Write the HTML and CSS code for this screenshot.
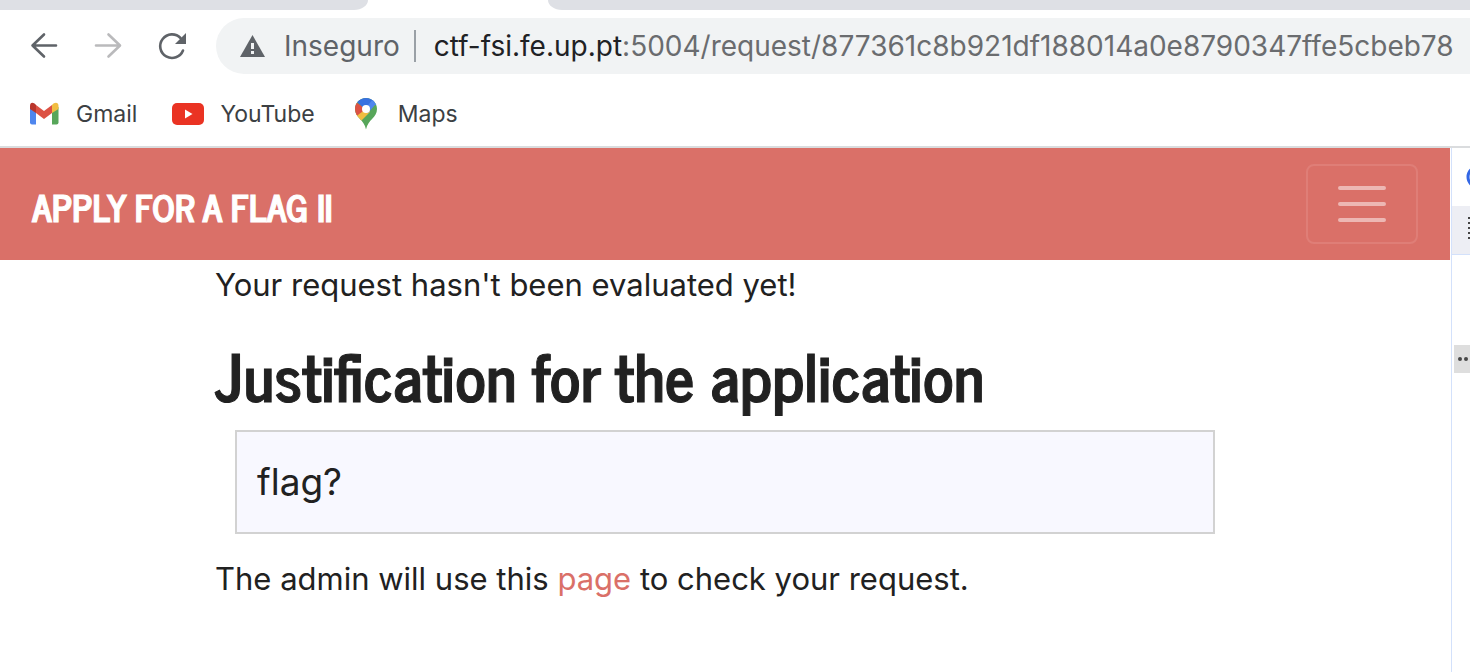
FILE: index.html
```html
<!DOCTYPE html>
<html lang="en">
<head>
<meta charset="utf-8">
<title>Apply for a Flag II</title>
<link rel="stylesheet" href="styles.css">
</head>
<body>
<header class="browser">
  <div class="tabs">
    <div class="tab tab-left"></div>
    <div class="tab-active"></div>
    <div class="tab tab-right"></div>
  </div>
  <div class="toolbar">
    <button class="nav-button" type="button" aria-label="Back">
      <svg width="32" height="32" viewBox="0 0 32 32" fill="none" stroke="#5f6368" stroke-width="2.600" stroke-linecap="round" stroke-linejoin="round"><path d="M28 15.500H4.500M16 4.500L4.500 15.500L16 26.500"/></svg>
    </button>
    <button class="nav-button" type="button" aria-label="Forward" disabled>
      <svg width="32" height="32" viewBox="0 0 32 32" fill="none" stroke="#bababc" stroke-width="2.600" stroke-linecap="round" stroke-linejoin="round"><path d="M4 15.500H27.500M16.500 4.500L28 15.500L16.500 26.500"/></svg>
    </button>
    <button class="nav-button" type="button" aria-label="Reload">
      <svg width="32" height="32" viewBox="0 0 32 32"><path d="M27 20.500A11.800 11.800 0 1 1 24.500 8" fill="none" stroke="#5f6368" stroke-width="2.600" stroke-linecap="round"/><path d="M30 3V14H19Z" fill="#5f6368"/></svg>
    </button>
    <div class="address">
      <svg class="warning" width="26" height="22" viewBox="0 0 26 22"><path d="M12.500 0L25 22H0Z" fill="#5f6368"/><path d="M11 8h3v6h-3zM11 16h3v3h-3z" fill="#f1f3f4"/></svg>
      <span class="security">Inseguro</span>
      <span class="divider"></span>
      <span class="url"><span class="host">ctf-fsi.fe.up.pt</span>:5004/request/877361c8b921df188014a0e8790347ffe5cbeb78</span>
    </div>
  </div>
  <nav class="bookmarks">
    <a class="bookmark" href="#">
      <svg width="32" height="32" viewBox="0 0 32 32"><path d="M2 9L8 12V26.500H4Q2 26.500 2 24.500Z" fill="#4f86ee"/><path d="M24 12L30.500 9V24.500Q30.500 26.500 28.500 26.500H24Z" fill="#57a65a"/><path d="M8 7L16 13L24 7V15L16 21L8 15Z" fill="#dc5244"/><path d="M2 11V8C2 4 5.500 4 8 7V15Z" fill="#b9362c"/><path d="M30.500 11V8C30.500 4 26.500 4 24 7V15Z" fill="#f1bd42"/></svg>
      <span>Gmail</span>
    </a>
    <a class="bookmark" href="#">
      <svg width="32" height="32" viewBox="0 0 32 32"><rect y="5" width="32" height="22" rx="5" fill="#ea3323"/><path d="M13 11.500V20.500L20.500 16Z" fill="#fff"/></svg>
      <span>YouTube</span>
    </a>
    <a class="bookmark" href="#">
      <svg width="32" height="32" viewBox="0 0 32 32"><defs><clipPath id="pin"><path d="M16 0C9.500 0 5 5 5 11C5 20 14 21 16 31.500C18 21 27 20 27 11C27 5 22.500 0 16 0Z"/></clipPath></defs><g clip-path="url(#pin)"><path d="M0 0H32V32H0Z" fill="#57a65a"/><path d="M4 18L16 5L20 14L8 26H4Z" fill="#f1bd42"/><path d="M0 0L16 11L6.500 18L0 16Z" fill="#dc5244"/><path d="M4 0H22L24 3L16 12L7.500 4.500Z" fill="#3871e0"/><path d="M23 1L32 0V7L25 7L18 15L15 11Z" fill="#4f86ee"/></g><circle cx="16" cy="11" r="4" fill="#fff"/></svg>
      <span>Maps</span>
    </a>
  </nav>
</header>
<div class="viewport">
  <div class="page">
    <nav class="navbar">
      <a class="brand" href="#">APPLY FOR A FLAG II</a>
      <button class="toggler" type="button" aria-label="Toggle navigation">
        <svg width="60" height="60" viewBox="0 0 60 60" stroke="#edb7b3" stroke-width="4" stroke-linecap="round"><path d="M8 14H52M8 30H52M8 46H52"/></svg>
      </button>
    </nav>
    <main class="content">
      <p class="status">Your request hasn't been evaluated yet!</p>
      <h1 class="title">Justification for the application</h1>
      <div class="answer">flag?</div>
      <p class="note">The admin will use this <a class="link" href="#">page</a> to check your request.</p>
    </main>
  </div>
  <aside class="devtools">
    <div class="panel-top">
      <svg width="18" height="58" viewBox="0 0 18 58"><circle cx="26" cy="29" r="10" fill="#eaf0fc" stroke="#3367e5" stroke-width="3"/></svg>
    </div>
    <div class="panel-bar">
      <svg width="18" height="48" viewBox="0 0 18 48"><path d="M17 11V35" stroke="#444" stroke-width="2" stroke-dasharray="2 3"/></svg>
    </div>
    <button class="more" type="button" aria-label="More">
      <svg width="16" height="28" viewBox="0 0 16 28" fill="#474747"><circle cx="6" cy="14" r="2"/><circle cx="12" cy="14" r="2"/></svg>
    </button>
  </aside>
</div>
</body>
</html>
```
FILE: styles.css
```css
* {
  box-sizing: border-box;
}

body {
  margin: 0;
  min-height: 100vh;
  display: flex;
  flex-direction: column;
  overflow: hidden;
  background: #fff;
  color: #212121;
  font-family: Inter, "Liberation Sans", sans-serif;
}

button {
  padding: 0;
  border: 0;
  background: none;
}

svg {
  display: block;
  flex: none;
}

a {
  color: inherit;
  text-decoration: none;
}

.browser {
  border-bottom: 2px solid #dadcde;
}

.tabs {
  display: flex;
  height: 10px;
}

.tab {
  background: #dee0e5;
}

.tab-left {
  flex: 0 0 25%;
  border-bottom-right-radius: 14px 10px;
}

.tab-active {
  flex: 0 0 180px;
}

.tab-right {
  flex: 1;
  border-bottom-left-radius: 14px 10px;
}

.toolbar {
  display: flex;
  align-items: center;
  gap: 32px;
  padding: 8px 0 8px 28px;
}

.address {
  flex: 1;
  min-width: 0;
  display: flex;
  align-items: center;
  height: 56px;
  margin-left: -4px;
  padding-left: 24px;
  border-radius: 28px 0 0 28px;
  background: #f1f3f4;
  color: #5f6368;
  font-size: 28px;
  white-space: nowrap;
  overflow: hidden;
}

.security {
  margin-left: 18px;
}

.divider {
  width: 2px;
  height: 32px;
  margin: 0 18px 0 14px;
  background: #9aa0a6;
}

.url {
  color: #6a6c6f;
}

.host {
  color: #202124;
}

.bookmarks {
  display: flex;
  align-items: center;
  gap: 35px;
  height: 64px;
  padding-left: 28px;
  color: #3c4043;
  font-size: 23px;
}

.bookmark {
  display: flex;
  align-items: center;
  gap: 16px;
}

.viewport {
  flex: 1;
  display: flex;
}

.page {
  flex: 1;
  margin-right: 1px;
}

.navbar {
  display: flex;
  align-items: center;
  justify-content: space-between;
  padding: 16px 32px;
  background: #da7068;
}

.brand {
  padding-top: 4px;
  color: #fff;
  font-family: "News Cycle", "Roboto Condensed", "Liberation Sans", sans-serif;
  font-size: 36px;
  font-weight: 700;
  -webkit-text-stroke: 1px currentColor;
}

.toggler {
  display: flex;
  align-items: center;
  justify-content: center;
  width: 112px;
  height: 80px;
  border: 2px solid #df7e77;
  border-radius: 8px;
}

.content {
  max-width: 1020px;
  margin: 0 auto;
  font-size: 31px;
  line-height: 50px;
}

.status,
.note {
  margin: 0;
}

.title {
  margin: 25px 0 15px;
  font-family: "News Cycle", "Roboto Condensed", "Liberation Sans", sans-serif;
  font-size: 64px;
  font-weight: 700;
  line-height: 80px;
  -webkit-text-stroke: 1px currentColor;
}

.answer {
  margin: 0 20px 20px;
  padding: 20px;
  border: 2px solid #d2d2d2;
  background: #f8f8ff;
  font-size: 37px;
  line-height: 60px;
}

.link {
  color: #da7068;
}

.devtools {
  flex: 0 0 19px;
  border-left: 1px solid #d3e1fb;
  background: #fff;
}

.panel-bar {
  border-bottom: 1px solid #d3e1fb;
  background: #edeef4;
}

.more {
  display: block;
  margin: 90px 0 0 2px;
  background: #dedede;
}
```
